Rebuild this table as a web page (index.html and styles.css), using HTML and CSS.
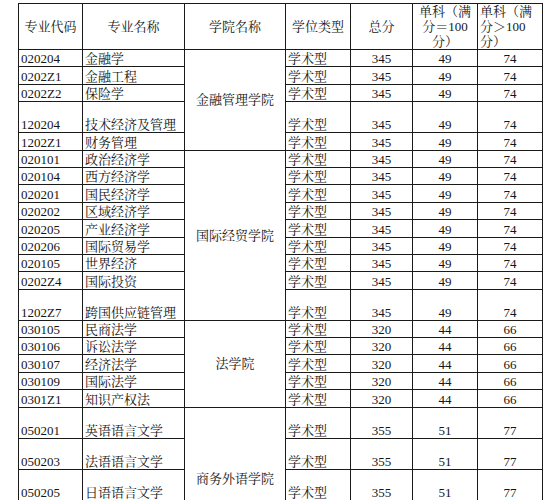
FILE: index.html
```html
<!DOCTYPE html>
<html lang="zh-CN">
<head>
<meta charset="utf-8">
<title>分数线</title>
<link rel="stylesheet" href="styles.css">
</head>
<body>
<table class="score">
  <colgroup>
    <col class="c1"><col class="c2"><col class="c3"><col class="c4"><col class="c5"><col class="c6"><col class="c7">
  </colgroup>
  <tr class="head">
    <td class="hc">专业代码</td>
    <td class="hc">专业名称</td>
    <td class="hc">学院名称</td>
    <td class="hc">学位类型</td>
    <td class="hc">总分</td>
    <td class="hc">单科（满分＝100分）</td>
    <td class="hl">单科（满分＞100分）</td>
  </tr>
  <tr class="r"><td class="t">020204</td><td class="t">金融学</td><td class="college" rowspan="5">金融管理学院</td><td class="t">学术型</td><td class="n">345</td><td class="n">49</td><td class="n">74</td></tr>
  <tr class="r"><td class="t">0202Z1</td><td class="t">金融工程</td><td class="t">学术型</td><td class="n">345</td><td class="n">49</td><td class="n">74</td></tr>
  <tr class="r"><td class="t">0202Z2</td><td class="t">保险学</td><td class="t">学术型</td><td class="n">345</td><td class="n">49</td><td class="n">74</td></tr>
  <tr class="tall"><td class="t">120204</td><td class="t">技术经济及管理</td><td class="t">学术型</td><td class="n">345</td><td class="n">49</td><td class="n">74</td></tr>
  <tr class="r"><td class="t">1202Z1</td><td class="t">财务管理</td><td class="t">学术型</td><td class="n">345</td><td class="n">49</td><td class="n">74</td></tr>
  <tr class="r"><td class="t">020101</td><td class="t">政治经济学</td><td class="college" rowspan="9">国际经贸学院</td><td class="t">学术型</td><td class="n">345</td><td class="n">49</td><td class="n">74</td></tr>
  <tr class="r"><td class="t">020104</td><td class="t">西方经济学</td><td class="t">学术型</td><td class="n">345</td><td class="n">49</td><td class="n">74</td></tr>
  <tr class="r"><td class="t">020201</td><td class="t">国民经济学</td><td class="t">学术型</td><td class="n">345</td><td class="n">49</td><td class="n">74</td></tr>
  <tr class="r"><td class="t">020202</td><td class="t">区域经济学</td><td class="t">学术型</td><td class="n">345</td><td class="n">49</td><td class="n">74</td></tr>
  <tr class="r"><td class="t">020205</td><td class="t">产业经济学</td><td class="t">学术型</td><td class="n">345</td><td class="n">49</td><td class="n">74</td></tr>
  <tr class="r"><td class="t">020206</td><td class="t">国际贸易学</td><td class="t">学术型</td><td class="n">345</td><td class="n">49</td><td class="n">74</td></tr>
  <tr class="r"><td class="t">020105</td><td class="t">世界经济</td><td class="t">学术型</td><td class="n">345</td><td class="n">49</td><td class="n">74</td></tr>
  <tr class="r"><td class="t">0202Z4</td><td class="t">国际投资</td><td class="t">学术型</td><td class="n">345</td><td class="n">49</td><td class="n">74</td></tr>
  <tr class="tall"><td class="t">1202Z7</td><td class="t">跨国供应链管理</td><td class="t">学术型</td><td class="n">345</td><td class="n">49</td><td class="n">74</td></tr>
  <tr class="r"><td class="t">030105</td><td class="t">民商法学</td><td class="college" rowspan="5">法学院</td><td class="t">学术型</td><td class="n">320</td><td class="n">44</td><td class="n">66</td></tr>
  <tr class="r"><td class="t">030106</td><td class="t">诉讼法学</td><td class="t">学术型</td><td class="n">320</td><td class="n">44</td><td class="n">66</td></tr>
  <tr class="r"><td class="t">030107</td><td class="t">经济法学</td><td class="t">学术型</td><td class="n">320</td><td class="n">44</td><td class="n">66</td></tr>
  <tr class="r"><td class="t">030109</td><td class="t">国际法学</td><td class="t">学术型</td><td class="n">320</td><td class="n">44</td><td class="n">66</td></tr>
  <tr class="r"><td class="t">0301Z1</td><td class="t">知识产权法</td><td class="t">学术型</td><td class="n">320</td><td class="n">44</td><td class="n">66</td></tr>
  <tr class="tall"><td class="t">050201</td><td class="t">英语语言文学</td><td class="college low" rowspan="3">商务外语学院</td><td class="t">学术型</td><td class="n">355</td><td class="n">51</td><td class="n">77</td></tr>
  <tr class="tall"><td class="t">050203</td><td class="t">法语语言文学</td><td class="t">学术型</td><td class="n">355</td><td class="n">51</td><td class="n">77</td></tr>
  <tr class="tall"><td class="t">050205</td><td class="t">日语语言文学</td><td class="t">学术型</td><td class="n">355</td><td class="n">51</td><td class="n">77</td></tr>
</table>
</body>
</html>
```

FILE: styles.css
```css
html, body {
  margin: 0;
  padding: 0;
  background: #ffffff;
  overflow: hidden;
}

body {
  padding: 3px 0 0 18px;
  font-family: "Liberation Serif", "Noto Serif CJK SC", "Noto Sans CJK SC", serif;
  font-size: 13px;
  color: #151515;
}

.score {
  border-collapse: collapse;
  table-layout: fixed;
  width: 524px;
}

.c1 { width: 64px; }
.c2 { width: 102px; }
.c3 { width: 101px; }
.c4 { width: 65px; }
.c5 { width: 62px; }
.c6 { width: 65px; }
.c7 { width: 65px; }

.score td {
  border: 1px solid #1a1a1a;
  padding: 0 2px;
  line-height: 15px;
  overflow: hidden;
  white-space: nowrap;
}

.head td {
  height: 45px;
  vertical-align: middle;
  white-space: normal;
  padding: 0 3px;
}

.head .hc { text-align: center; }
.head .hl { text-align: left; padding: 0 2px; }

.r td { height: 16.4px; }
.tall td { height: 30px; }

.t {
  text-align: left;
  vertical-align: bottom;
}

.n {
  text-align: center;
  vertical-align: bottom;
}

.score td.college {
  text-align: center;
  vertical-align: middle;
}

.score td.college.low {
  padding-top: 50px;
}
```
